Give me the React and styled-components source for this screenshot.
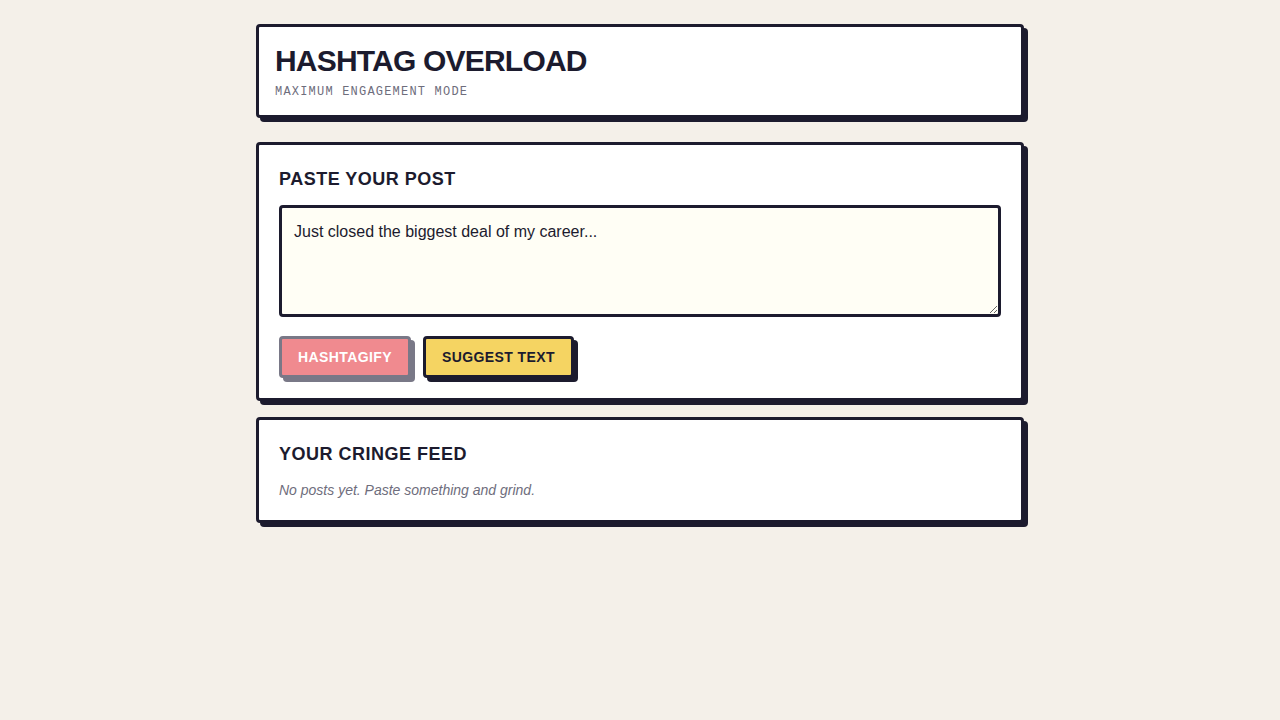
import React, { useState } from "react";
import styled, { createGlobalStyle } from "styled-components";

const ink = "#1c1b2e";

const GlobalStyle = createGlobalStyle`
  * { box-sizing: border-box; }
  body {
    margin: 0;
    background: #f4f0e9;
    font-family: "Liberation Sans", Arial, sans-serif;
    color: ${ink};
  }
`;

const Page = styled.main`
  width: 768px;
  margin: 0 auto;
  padding: 24px 0;
  display: flex;
  flex-direction: column;
  gap: 16px;
`;

const Card = styled.section`
  background: #fff;
  border: 3px solid ${ink};
  border-radius: 4px;
  box-shadow: 4px 4px 0 ${ink};
  padding: ${(p) => (p.$tight ? "16px" : "23px 20px 20px")};
  margin-bottom: ${(p) => (p.$tight ? "8px" : "0")};
`;

const Title = styled.h1`
  margin: 0;
  font-size: 30px;
  line-height: 36px;
  font-weight: 700;
  letter-spacing: -0.8px;
`;

const Tagline = styled.p`
  margin: 6px 0 0;
  font-family: "Liberation Mono", "DejaVu Sans Mono", monospace;
  font-size: 12px;
  letter-spacing: 1.2px;
  color: #6e6d7c;
`;

const Heading = styled.h2`
  margin: 0 0 ${(p) => (p.$space ? "15px" : "16px")};
  font-size: 18px;
  line-height: 22px;
  font-weight: 700;
  letter-spacing: 0.5px;
`;

const PostInput = styled.textarea`
  display: block;
  width: 100%;
  height: 112px;
  padding: 12px;
  border: 3px solid ${ink};
  border-radius: 4px;
  background: #fffef5;
  font-family: "Liberation Sans", Arial, sans-serif;
  font-size: 16px;
  line-height: 1.5;
  color: ${ink};
  resize: vertical;
  outline: none;
`;

const Actions = styled.div`
  display: flex;
  gap: 12px;
  margin-top: 19px;
`;

const Button = styled.button`
  height: 42px;
  padding: 0 16px;
  border: 3px solid ${(p) => (p.disabled ? "#797887" : ink)};
  border-radius: 4px;
  box-shadow: 4px 4px 0 ${(p) => (p.disabled ? "#797887" : ink)};
  background: ${(p) => p.$bg};
  color: ${(p) => (p.disabled ? "#fff" : ink)};
  font-family: "Liberation Sans", Arial, sans-serif;
  font-size: 14px;
  font-weight: 700;
  letter-spacing: 0.4px;
  cursor: ${(p) => (p.disabled ? "not-allowed" : "pointer")};
`;

const Empty = styled.p`
  margin: 0 0 1px;
  font-size: 14px;
  line-height: 18px;
  font-style: italic;
  color: #6e6d7c;
`;

export default function App() {
  const [post, setPost] = useState("Just closed the biggest deal of my career...");

  return (
    <>
      <GlobalStyle />
      <Page>
        <Card $tight>
          <Title>HASHTAG OVERLOAD</Title>
          <Tagline>MAXIMUM ENGAGEMENT MODE</Tagline>
        </Card>

        <Card>
          <Heading $space>PASTE YOUR POST</Heading>
          <PostInput value={post} onChange={(e) => setPost(e.target.value)} />
          <Actions>
            <Button disabled $bg="#f08a8f">HASHTAGIFY</Button>
            <Button $bg="#f5d462">SUGGEST TEXT</Button>
          </Actions>
        </Card>

        <Card>
          <Heading>YOUR CRINGE FEED</Heading>
          <Empty>No posts yet. Paste something and grind.</Empty>
        </Card>
      </Page>
    </>
  );
}
